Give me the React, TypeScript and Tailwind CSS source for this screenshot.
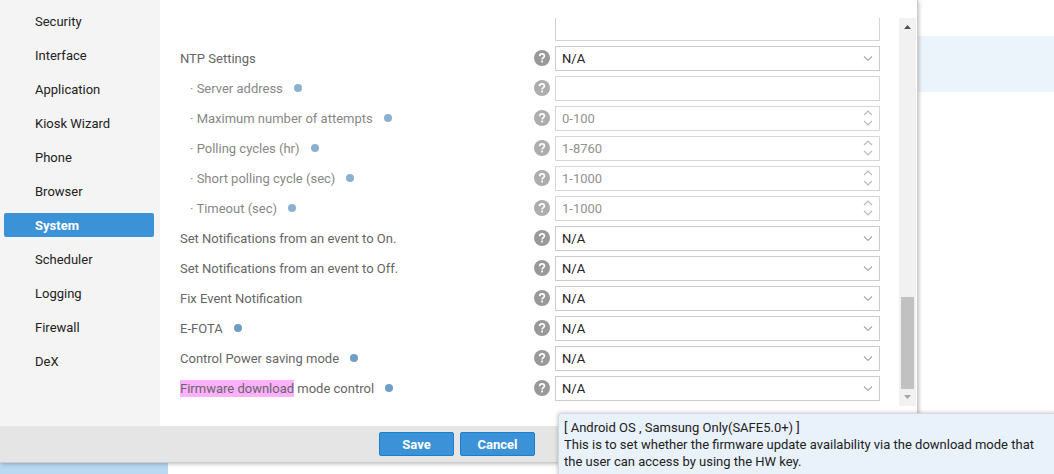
import type { ReactNode } from "react";

type Setting = {
  id: string;
  label: string;
  mark?: string;
  dot?: boolean;
  sub?: boolean;
  kind: "select" | "text" | "number";
  hint?: string;
};

const menu = [
  "Security",
  "Interface",
  "Application",
  "Kiosk Wizard",
  "Phone",
  "Browser",
  "System",
  "Scheduler",
  "Logging",
  "Firewall",
  "DeX",
];

const settings: Setting[] = [
  { id: "ntp", label: "NTP Settings", kind: "select" },
  { id: "server", label: "Server address", dot: true, sub: true, kind: "text" },
  { id: "attempts", label: "Maximum number of attempts", dot: true, sub: true, kind: "number", hint: "0-100" },
  { id: "polling", label: "Polling cycles (hr)", dot: true, sub: true, kind: "number", hint: "1-8760" },
  { id: "short", label: "Short polling cycle (sec)", dot: true, sub: true, kind: "number", hint: "1-1000" },
  { id: "timeout", label: "Timeout (sec)", dot: true, sub: true, kind: "number", hint: "1-1000" },
  { id: "notify-on", label: "Set Notifications from an event to On.", kind: "select" },
  { id: "notify-off", label: "Set Notifications from an event to Off.", kind: "select" },
  { id: "fix", label: "Fix Event Notification", kind: "select" },
  { id: "efota", label: "E-FOTA", dot: true, kind: "select" },
  { id: "power", label: "Control Power saving mode", dot: true, kind: "select" },
  { id: "firmware", mark: "Firmware download", label: " mode control", dot: true, kind: "select" },
];

function HelpButton({ name }: { name: string }) {
  return (
    <button type="button" aria-label={`Help: ${name}`} className="mr-[5px] mb-px size-4 shrink-0">
      <svg viewBox="0 0 16 16" className="size-4" aria-hidden="true">
        <circle cx="8" cy="8" r="8" fill="#999" />
        <path
          d="M5.7 6.2C5.7 4.6 6.6 3.9 8 3.9s2.4.8 2.4 2.1c0 1.6-2.3 1.7-2.3 3.5"
          fill="none"
          stroke="#fff"
          strokeWidth="1.7"
        />
        <rect x="7.2" y="10.6" width="1.8" height="1.8" fill="#fff" />
      </svg>
    </button>
  );
}

function Overlay({ children }: { children: ReactNode }) {
  return (
    <svg
      viewBox="0 0 10 17"
      className="pointer-events-none absolute top-1 right-[7px] h-[17px] w-[10px]"
      fill="none"
      stroke="#aaa"
      strokeWidth="1.2"
      aria-hidden="true"
    >
      {children}
    </svg>
  );
}

function Field({ item }: { item: Setting }) {
  const box = "h-[25px] w-full border border-[#ccc] bg-white px-[6px] text-[13px] text-[#222]";
  if (item.kind === "select") {
    return (
      <div className="relative flex-1">
        <select id={item.id} className={`${box} appearance-none`}>
          <option>N/A</option>
        </select>
        <Overlay>
          <path d="M1 6.500l4 4 4-4" />
        </Overlay>
      </div>
    );
  }
  return (
    <div className="relative flex-1">
      <input
        id={item.id}
        type={item.kind}
        placeholder={item.hint}
        className={`${box} [appearance:textfield] placeholder:text-[#777] [&::-webkit-inner-spin-button]:appearance-none`}
      />
      {item.kind === "number" && (
        <Overlay>
          <path d="M1 5l4-4 4 4M1 11l4 4 4-4" />
        </Overlay>
      )}
    </div>
  );
}

function SettingRow({ item }: { item: Setting }) {
  return (
    <div className={`flex items-center ${item.sub ? "opacity-80" : ""}`}>
      <div className={`flex w-[354px] shrink-0 items-center ${item.sub ? "pl-[10px]" : ""}`}>
        <label htmlFor={item.id} className={`whitespace-pre ${item.sub ? "text-[#6a6a6a]" : "text-[#666]"}`}>
          {item.sub && "· "}
          {item.mark && <mark className="bg-[#ffb0ff] py-px text-[#666]">{item.mark}</mark>}
          {item.label}
        </label>
        {item.dot && <span className="mb-px ml-[11px] size-2 rounded-full bg-[#6f9dc8]" />}
      </div>
      <HelpButton name={`${item.mark ?? ""}${item.label}`} />
      <Field item={item} />
    </div>
  );
}

function Scrollbar() {
  return (
    <div className="flex w-[17px] shrink-0 flex-col items-center bg-[#f1f1f1]" aria-hidden="true">
      <svg viewBox="0 0 17 17" className="size-[17px]">
        <path d="M5 11h7L8.5 7z" fill="#505050" />
      </svg>
      <div className="flex-1" />
      <div className="h-[92px] w-[13px] bg-[#c1c1c1]" />
      <svg viewBox="0 0 17 17" className="size-[17px]">
        <path d="M5 6h7l-3.500 4z" fill="#a3a3a3" />
      </svg>
    </div>
  );
}

export default function App() {
  const button =
    "h-6 w-[75px] rounded-[2px] border border-[#1a7fd0] bg-[#3b92d6] text-[13px] font-bold text-white";
  return (
    <div className="flex h-screen overflow-hidden bg-white font-['Roboto','Liberation_Sans',sans-serif] text-[13px] leading-[17px] text-[#222]">
      <div className="flex min-w-0 flex-1 flex-col">
        <section className="relative z-10 border-r border-b border-[#ccc] bg-white shadow-[1px_1px_4px_rgba(0,0,0,0.25)]">
          <div className="flex">
            <nav className="w-40 shrink-0 bg-[#f4f4f4] pt-[9px] pr-[6px] pb-[10px] pl-1">
              <ul className="flex flex-col gap-[10px]">
                {menu.map((name) => (
                  <li key={name}>
                    <a
                      href={`#${name}`}
                      className={`flex h-6 items-center rounded-[2px] pl-[31px] ${
                        name === "System" ? "bg-[#3b92d6] font-bold text-white" : "text-[#222]"
                      }`}
                    >
                      {name}
                    </a>
                  </li>
                ))}
              </ul>
            </nav>
            <main className="flex min-w-0 flex-1 pt-[18px] pr-px pb-5">
              <form className="flex min-w-0 flex-1 flex-col gap-[5px] pr-[19px] pb-[5px] pl-5">
                <textarea
                  aria-label="Description"
                  className="ml-[375px] h-[23px] resize-none border border-t-0 border-[#d4d4d4]"
                />
                {settings.map((item) => (
                  <SettingRow key={item.id} item={item} />
                ))}
              </form>
              <Scrollbar />
            </main>
          </div>
          <footer className="flex h-9 items-center justify-center gap-[6px] bg-[#e5e5e5] pr-[3px]">
            <button type="button" className={button}>
              Save
            </button>
            <button type="button" className={button}>
              Cancel
            </button>
          </footer>
          <div
            role="tooltip"
            className="absolute top-[413px] left-[558px] h-20 w-[500px] rounded-[3px] border border-[#d8d8d8] bg-[#e9f1fa] px-[5px] py-[5px] shadow-[0_0_4px_rgba(0,0,0,0.25)]"
          >
            <p>[ Android OS , Samsung Only(SAFE5.0+) ]</p>
            <p>
              This is to set whether the firmware update availability via the download mode that the user can access by
              using the HW key.
            </p>
          </div>
        </section>
        <div className="w-42 flex-1 bg-[#b9d8f2]" />
      </div>
      <aside className="w-[136px] shrink-0 pt-9">
        <div className="h-14 bg-[#ebf3fb]" />
      </aside>
    </div>
  );
}
